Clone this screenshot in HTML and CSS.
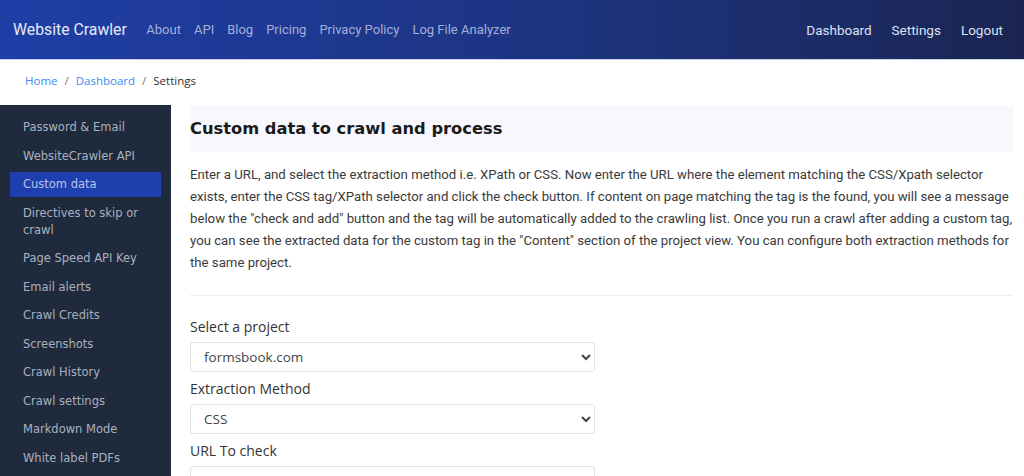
FILE: index.html
```
<!DOCTYPE html>
<html lang="en">

<head>
    <meta charset="UTF-8">
    <meta name="viewport" content="width=device-width, initial-scale=1.0">
    <title>Settings - Website Crawler</title>
    <link rel="stylesheet" href="styles.css">
</head>

<body>
    <nav class="navbar">
        <a class="brand" href="#">Website Crawler</a>
        <ul class="nav-links">
            <li><a href="#">About</a></li>
            <li><a href="#">API</a></li>
            <li><a href="#">Blog</a></li>
            <li><a href="#">Pricing</a></li>
            <li><a href="#">Privacy Policy</a></li>
            <li><a href="#">Log File Analyzer</a></li>
        </ul>
        <ul class="nav-right">
            <li><a href="#">Dashboard</a></li>
            <li><a href="#">Settings</a></li>
            <li><a href="#">Logout</a></li>
        </ul>
    </nav>

    <div class="breadcrumb">
        <a href="#">Home</a><span class="sep">/</span><a href="#">Dashboard</a><span class="sep">/</span><span class="current">Settings</span>
    </div>

    <div class="layout">
        <aside class="sidebar">
            <a href="#">Password &amp; Email</a>
            <a href="#">WebsiteCrawler API</a>
            <a href="#" class="active">Custom data</a>
            <a href="#">Directives to skip or crawl</a>
            <a href="#">Page Speed API Key</a>
            <a href="#">Email alerts</a>
            <a href="#">Crawl Credits</a>
            <a href="#">Screenshots</a>
            <a href="#">Crawl History</a>
            <a href="#">Crawl settings</a>
            <a href="#">Markdown Mode</a>
            <a href="#">White label PDFs</a>
        </aside>

        <main class="content">
            <div class="title-box">
                <h1>Custom data to crawl and process</h1>
            </div>
            <p class="intro">Enter a URL, and select the extraction method i.e. XPath or CSS. Now enter the URL where the element matching the CSS/Xpath selector exists, enter the CSS tag/XPath selector and click the check button. If content on page matching the tag is the found, you will see a message below the "check and add" button and the tag will be automatically added to the crawling list. Once you run a crawl after adding a custom tag, you can see the extracted data for the custom tag in the "Content" section of the project view. You can configure both extraction methods for the same project.</p>
            <hr>
            <form class="custom-form">
                <label for="project">Select a project</label>
                <select id="project">
                    <option>formsbook.com</option>
                </select>
                <label for="method">Extraction Method</label>
                <select id="method">
                    <option>CSS</option>
                    <option>XPath</option>
                </select>
                <label for="url">URL To check</label>
                <input type="text" id="url">
            </form>
        </main>
    </div>
</body>

</html>
```

FILE: styles.css
```
body {
    margin: 0;
    font-family: "Open Sans", sans-serif;
    background-color: #fff;
    color: #333;
    overflow: hidden;
}

a {
    text-decoration: none;
}

ul {
    list-style: none;
    margin: 0;
    padding: 0;
}

.navbar {
    display: flex;
    align-items: center;
    height: 59px;
    padding: 0 11px 0 13px;
    background: linear-gradient(90deg, #1f3ea6 0%, #1d3480 55%, #1a2552 100%);
    border-bottom: 1px solid #c9d0e6;
}

.brand {
    font-family: Roboto, sans-serif;
    font-size: 15.8px;
    color: #e6e9f5;
    margin-right: 13px;
}

.nav-links, .nav-right {
    display: flex;
}

.nav-links a, .nav-right a {
    display: block;
    padding: 0 6.5px;
    font-family: Roboto, sans-serif;
    font-size: 13px;
}

.nav-links a {
    color: #a3afd9;
}

.nav-right {
    margin-left: auto;
}

.nav-right a {
    color: #dce1f3;
    padding: 0 10px;
    font-size: 13.5px;
}

.breadcrumb {
    padding: 13px 25px 16px;
    font-size: 11.5px;
    line-height: 16px;
}

.breadcrumb a {
    color: #3b8cf6;
}

.breadcrumb .sep {
    color: #777;
    padding: 0 7px;
}

.breadcrumb .current {
    color: #333;
}

.layout {
    display: flex;
    align-items: flex-start;
}

.sidebar {
    width: 171px;
    height: 380px;
    flex-shrink: 0;
    background-color: #1f2a3c;
    padding: 10px 10px;
    box-sizing: border-box;
}

.sidebar a {
    display: block;
    padding: 4px 13px;
    font-family: "DejaVu Sans", sans-serif;
    font-size: 11.5px;
    line-height: 17px;
    color: #a9b1c0;
    margin-bottom: 3.5px;
}

.sidebar a.active {
    background-color: #1e40af;
    color: #b9c4e6;
}

.content {
    flex: 1;
    padding: 0 11px 0 19px;
}

.title-box {
    background-color: #f8f8fc;
    padding: 12px 0 12px 0;
    margin-top: 1px;
}

.title-box h1 {
    margin: 0;
    font-family: "DejaVu Sans", sans-serif;
    font-size: 16.3px;
    line-height: 22px;
    font-weight: bold;
    color: #1a1a1a;
}

.intro {
    font-family: Roboto, sans-serif;
    font-size: 13.2px;
    line-height: 22px;
    color: #3a3a3a;
    margin: 12px 0 21px;
}

hr {
    border: none;
    border-top: 1px solid #eeeeee;
    margin: 0 0 21px;
}

.custom-form {
    display: flex;
    flex-direction: column;
    align-items: flex-start;
}

.custom-form label {
    font-size: 14px;
    line-height: 19px;
    color: #333;
    margin: 0 0 6px;
}

.custom-form select, .custom-form input {
    width: 405px;
    height: 30px;
    box-sizing: border-box;
    border: 1px solid #dee2e6;
    border-radius: 3px;
    background-color: #fff;
    font-family: "Open Sans", sans-serif;
    font-size: 13.5px;
    color: #444;
    padding: 0 9px;
    margin-bottom: 7px;
}
```
